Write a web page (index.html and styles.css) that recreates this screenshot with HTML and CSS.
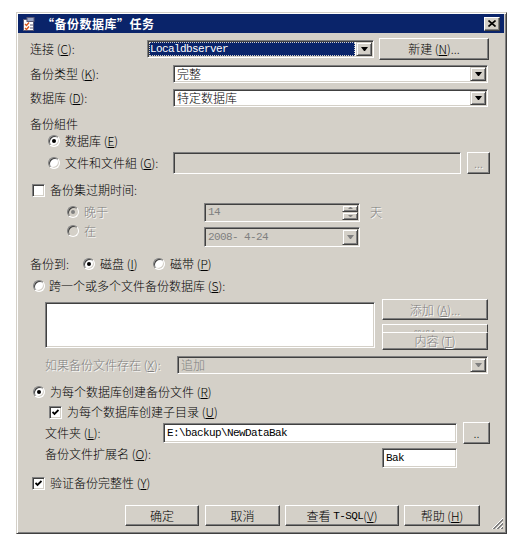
FILE: index.html
```html
<!DOCTYPE html>
<html lang="zh-CN">
<head>
    <meta charset="UTF-8">
    <title>“备份数据库”任务</title>
    <link rel="stylesheet" href="styles.css">
</head>
<body>
    <div class="dialog">
        <div class="titlebar">
            <svg class="app-icon" width="14" height="14" viewBox="0 0 14 14">
                <rect x="1.5" y="2.5" width="10" height="11" fill="#fff" stroke="#5a5a78"/>
                <rect x="5" y="0.5" width="7" height="4" fill="#9aa6c4" stroke="#5a5a78"/>
                <path d="M3 7l1.5 1.5L7 5.5" stroke="#d8561c" stroke-width="1.4" fill="none"/>
                <path d="M3 11l1.5 1.5L7 9.5" stroke="#d8561c" stroke-width="1.4" fill="none"/>
                <path d="M8 8h3M8 11h3" stroke="#5a5a78"/>
            </svg>
            <span class="title">“备份数据库”任务</span>
            <div class="close">
                <svg width="8" height="7" viewBox="0 0 8 7">
                    <path d="M0.5 0.5L7.5 6.5M7.5 0.5L0.5 6.5" stroke="#000" stroke-width="1.6"/>
                </svg>
            </div>
        </div>

        <div class="content">
            <div class="row r-conn">
                <span class="label w-conn">连接 (<u>C</u>):</span>
                <div class="field combo w-conn-combo">
                    <span class="sel mono">Localdbserver</span>
                    <span class="drop"></span>
                </div>
                <button class="btn w-new">新建 (<u>N</u>)...</button>
            </div>

            <div class="row r-type">
                <span class="label w-wide">备份类型 (<u>K</u>):</span>
                <div class="field combo w-type"><span class="value">完整</span><span class="drop"></span></div>
            </div>

            <div class="row r-db">
                <span class="label w-wide">数据库 (<u>D</u>):</span>
                <div class="field combo w-type"><span class="value">特定数据库</span><span class="drop"></span></div>
            </div>

            <div class="row r-group">
                <span class="label">备份組件</span>
            </div>

            <div class="row r-dbopt">
                <span class="radio on"></span>
                <span class="opt-text">数据库 (<u>E</u>)</span>
            </div>

            <div class="row r-files">
                <div class="opt w-files-opt">
                    <span class="radio"></span>
                    <span class="opt-text">文件和文件組 (<u>G</u>):</span>
                </div>
                <div class="field disabled w-files"></div>
                <button class="btn dis w-dots">...</button>
            </div>

            <div class="row r-expire">
                <span class="check"></span>
                <span class="opt-text">备份集过期时间:</span>
            </div>

            <div class="row r-after">
                <div class="opt w-after-opt">
                    <span class="radio disabled on"></span>
                    <span class="opt-text dis">晚于</span>
                </div>
                <div class="field disabled w-days">
                    <span class="value mono">14</span>
                    <span class="spin">
                        <span class="spin-btn up"></span>
                        <span class="spin-btn down"></span>
                    </span>
                </div>
                <span class="unit dis">天</span>
            </div>

            <div class="row r-on">
                <div class="opt w-after-opt">
                    <span class="radio disabled"></span>
                    <span class="opt-text dis">在</span>
                </div>
                <div class="field combo disabled w-date">
                    <span class="value mono">2008- 4-24</span>
                    <span class="drop"></span>
                </div>
            </div>

            <div class="row r-dest">
                <span class="label w-dest">备份到:</span>
                <div class="opt w-disk">
                    <span class="radio on"></span>
                    <span class="opt-text">磁盘 (<u>I</u>)</span>
                </div>
                <span class="radio"></span>
                <span class="opt-text">磁带 (<u>P</u>)</span>
            </div>

            <div class="row r-stripe">
                <span class="radio"></span>
                <span class="opt-text tight">跨一个或多个文件备份数据库 (<u>S</u>):</span>
            </div>

            <div class="row r-list">
                <div class="field list"></div>
                <div class="stack">
                    <button class="btn dis w-add">添加 (<u>A</u>)...</button>
                    <button class="btn dis w-del">删除 (<u>M</u>)</button>
                    <button class="btn dis w-cont">内容 (<u>T</u>)</button>
                </div>
            </div>

            <div class="row r-exists">
                <span class="label dis w-exists">如果备份文件存在 (<u>X</u>):</span>
                <div class="field combo disabled w-append"><span class="value">追加</span><span class="drop"></span></div>
            </div>

            <div class="row r-perdb">
                <span class="radio on"></span>
                <span class="opt-text">为每个数据库创建备份文件 (<u>R</u>)</span>
            </div>

            <div class="row r-subdir">
                <span class="check on">
                    <svg width="7" height="7" viewBox="0 0 7 7"><path d="M0.5 3l2 2 4-4" stroke="#000" stroke-width="1.8" fill="none"/></svg>
                </span>
                <span class="opt-text">为每个数据库创建子目录 (<u>U</u>)</span>
            </div>

            <div class="row r-folder">
                <span class="label w-folder">文件夹 (<u>L</u>):</span>
                <div class="field w-path"><span class="value mono">E:\backup\NewDataBak</span></div>
                <button class="btn w-browse">..</button>
            </div>

            <div class="row r-ext">
                <span class="label w-ext">备份文件扩展名 (<u>O</u>):</span>
                <div class="field w-bak"><span class="value mono">Bak</span></div>
            </div>

            <div class="row r-verify">
                <span class="check on">
                    <svg width="7" height="7" viewBox="0 0 7 7"><path d="M0.5 3l2 2 4-4" stroke="#000" stroke-width="1.8" fill="none"/></svg>
                </span>
                <span class="opt-text">验证备份完整性 (<u>Y</u>)</span>
            </div>

            <div class="row r-actions">
                <button class="btn w-ok">确定</button>
                <button class="btn w-cancel">取消</button>
                <button class="btn w-sql">查看&nbsp; <span class="mono">T-SQL</span>(<u>V</u>)</button>
                <button class="btn w-help">帮助 (<u>H</u>)</button>
            </div>
        </div>

        <svg class="grip" width="12" height="12" viewBox="0 0 12 12" shape-rendering="crispEdges">
            <path d="M11.5 0.5L0.5 11.5M11.5 4.5L4.5 11.5M11.5 8.5L8.5 11.5" stroke="#fff"/>
            <path d="M11.5 1.5L1.5 11.5M11.5 2.5L2.5 11.5M11.5 5.5L5.5 11.5M11.5 6.5L6.5 11.5M11.5 9.5L9.5 11.5M11.5 10.5L10.5 11.5" stroke="#808080"/>
        </svg>
    </div>
</body>
</html>
```

FILE: styles.css
```css
body {
    margin: 0;
    background: #fff;
    color: #000;
    font-family: "Noto Sans CJK SC", sans-serif;
    font-size: 12px;
    font-weight: 300;
    line-height: 14px;
}
u {
    text-underline-offset: 1px;
}
.dialog {
    position: relative;
    box-sizing: border-box;
    width: 491px;
    height: 522px;
    margin: 12px 0 0 16px;
    padding: 1px 2px 2px 1px;
    background: #d4d0c8;
    border: 1px solid;
    border-color: #d4d0c8 #404040 #404040 #d4d0c8;
    box-shadow: inset 1px 1px #fff, inset -1px -1px #808080;
}
.titlebar {
    display: flex;
    align-items: center;
    height: 19px;
    padding-left: 4px;
    background: #0a246a;
    color: #fff;
    font-weight: bold;
}
.app-icon {
    flex: none;
}
.title {
    margin-left: 6px;
    letter-spacing: 0.5px;
}
.close {
    box-sizing: border-box;
    display: flex;
    align-items: center;
    justify-content: center;
    width: 16px;
    height: 14px;
    margin-left: auto;
    margin-right: 4px;
    background: #d4d0c8;
    border: 1px solid;
    border-color: #fff #404040 #404040 #fff;
    box-shadow: inset -1px -1px #808080;
}
.content {
    display: flex;
    flex-direction: column;
    padding-left: 12px;
}
.row {
    display: flex;
    align-items: center;
    flex: none;
}
.label,
.opt-text {
    white-space: nowrap;
    flex: none;
}
.opt {
    display: flex;
    align-items: center;
    flex: none;
}
.opt-text {
    margin-left: 5px;
}
.opt-text.tight {
    margin-left: 4px;
}
.dis {
    color: #808080;
    text-shadow: 1px 1px #fff;
}
.mono {
    font-family: "Liberation Mono", monospace;
    font-size: 11px;
    font-weight: normal;
    letter-spacing: -0.6px;
}

/* sunken fields */
.field {
    box-sizing: border-box;
    display: flex;
    align-items: center;
    flex: none;
    background: #fff;
    border: 1px solid;
    border-color: #808080 #fff #fff #808080;
    box-shadow: inset 1px 1px #404040, inset -1px -1px #d4d0c8;
    padding: 1px 1px 1px 3px;
    white-space: nowrap;
    overflow: hidden;
}
.field.disabled {
    background: #d4d0c8;
    color: #808080;
}
.combo {
    align-items: stretch;
}
.combo .value {
    display: flex;
    align-items: center;
}
.sel {
    display: flex;
    align-items: center;
    flex: 1;
    margin: 0 1px 0 -2px;
    padding-left: 1px;
    background: #0a246a;
    color: #fff;
    outline: 1px dotted #d4d0c8;
    outline-offset: -1px;
}
.drop {
    box-sizing: border-box;
    display: flex;
    align-items: center;
    justify-content: center;
    width: 16px;
    margin-left: auto;
    background: #d4d0c8;
    border: 1px solid;
    border-color: #d4d0c8 #404040 #404040 #d4d0c8;
    box-shadow: inset 1px 1px #fff, inset -1px -1px #808080;
}
.drop::after {
    content: "";
    width: 1px;
    height: 0;
    border-top: 4px solid #000;
    border-left: 3px solid transparent;
    border-right: 3px solid transparent;
}
.disabled .drop::after {
    border-top-color: #808080;
}
.spin {
    display: flex;
    flex-direction: column;
    align-self: stretch;
    width: 16px;
    margin-left: auto;
}
.spin-btn {
    box-sizing: border-box;
    flex: 1;
    display: flex;
    align-items: center;
    justify-content: center;
    background: #d4d0c8;
    border: 1px solid;
    border-color: #d4d0c8 #404040 #404040 #d4d0c8;
    box-shadow: inset 1px 1px #fff, inset -1px -1px #808080;
}
.spin-btn::after {
    content: "";
    width: 1px;
    height: 0;
    border-left: 2px solid transparent;
    border-right: 2px solid transparent;
}
.spin-btn.up::after {
    border-bottom: 2px solid #808080;
}
.spin-btn.down::after {
    border-top: 2px solid #808080;
}
.list {
    width: 330px;
    height: 46px;
    margin-top: 3px;
}

/* raised buttons */
.btn {
    box-sizing: border-box;
    display: flex;
    align-items: center;
    justify-content: center;
    flex: none;
    padding: 0;
    font: inherit;
    color: #000;
    white-space: nowrap;
    background: #d4d0c8;
    border: 1px solid;
    border-color: #fff #404040 #404040 #fff;
    box-shadow: inset -1px -1px #808080;
}
.btn.dis {
    color: #808080;
}

/* radios and checkboxes */
.radio {
    box-sizing: border-box;
    display: flex;
    align-items: center;
    justify-content: center;
    flex: none;
    width: 12px;
    height: 12px;
    border-radius: 50%;
    background: #fff;
    border: 1px solid;
    border-color: #808080 #fff #fff #808080;
    box-shadow: inset 1px 1px #404040, inset -1px -1px #d4d0c8;
}
.radio.on::after {
    content: "";
    width: 4px;
    height: 4px;
    border-radius: 50%;
    background: #000;
}
.radio.disabled {
    background: #d4d0c8;
}
.radio.disabled.on::after {
    background: #808080;
}
.check {
    box-sizing: border-box;
    display: flex;
    align-items: center;
    justify-content: center;
    flex: none;
    width: 13px;
    height: 13px;
    background: #fff;
    border: 1px solid;
    border-color: #808080 #fff #fff #808080;
    box-shadow: inset 1px 1px #404040, inset -1px -1px #d4d0c8;
}

/* rows */
.r-conn { height: 22px; margin-top: 5px; }
.r-type { height: 20px; margin-top: 4px; }
.r-db { height: 20px; margin-top: 4px; }
.r-group { height: 14px; margin-top: 9px; }
.r-dbopt { height: 14px; margin-top: 3px; padding-left: 18px; }
.r-files { height: 22px; margin-top: 4px; padding-left: 18px; }
.r-expire { height: 14px; margin-top: 9px; padding-left: 2px; }
.r-after { height: 20px; margin-top: 5px; padding-left: 37px; }
.r-on { height: 23px; margin-top: 2px; padding-left: 37px; align-items: flex-start; }
.r-on .opt { height: 14px; }
.r-dest { height: 14px; margin-top: 10px; }
.r-stripe { height: 14px; margin-top: 8px; padding-left: 3px; }
.r-list { height: 52px; margin-top: 6px; padding-left: 15px; align-items: flex-start; }
.r-exists { height: 20px; margin-top: 4px; padding-left: 15px; }
.r-perdb { height: 14px; margin-top: 10px; padding-left: 3px; }
.r-subdir { height: 14px; margin-top: 6px; padding-left: 19px; }
.r-folder { height: 22px; margin-top: 3px; padding-left: 15px; }
.r-ext { height: 21px; margin-top: 3px; padding-left: 15px; align-items: flex-start; }
.r-verify { height: 14px; margin-top: 8px; padding-left: 2px; }
.r-actions { height: 21px; margin-top: 15px; padding-left: 95px; }

/* widths */
.w-conn { width: 117px; }
.w-conn-combo { width: 227px; height: 18px; }
.w-new { width: 110px; height: 22px; margin-left: 5px; }
.w-wide { width: 143px; }
.w-type { width: 315px; height: 18px; }
.w-files-opt { width: 125px; }
.w-files { width: 288px; height: 22px; }
.w-dots { width: 23px; height: 22px; margin-left: 6px; }
.w-after-opt { width: 137px; }
.w-days { width: 156px; height: 19px; }
.unit { margin-left: 10px; }
.w-date { width: 156px; height: 20px; margin-top: 3px; }
.w-dest { width: 53px; }
.w-disk { width: 70px; }
.stack {
    display: flex;
    flex-direction: column;
    width: 106px;
    margin-left: 7px;
}
.w-add { height: 21px; }
/* the delete button sits under the contents button; only its top edge shows */
.w-del {
    height: 8px;
    margin-top: 4px;
    padding-top: 4px;
    align-items: flex-start;
    overflow: hidden;
    border-bottom: 0;
    box-shadow: none;
}
.w-cont { height: 18px; }
.w-exists { width: 132px; }
.w-append { width: 311px; height: 18px; }
.w-folder { width: 118px; }
.w-path { width: 294px; height: 20px; }
.w-browse { width: 27px; height: 22px; margin-left: 6px; }
.w-ext { width: 337px; }
.w-bak { width: 75px; height: 20px; margin-top: 1px; }
.w-ok { width: 74px; height: 21px; }
.w-cancel { width: 75px; height: 21px; margin-left: 6px; }
.w-sql { width: 114px; height: 21px; margin-left: 5px; }
.w-help { width: 76px; height: 21px; margin-left: 5px; }

.grip {
    position: absolute;
    right: 3px;
    bottom: 3px;
}
```
